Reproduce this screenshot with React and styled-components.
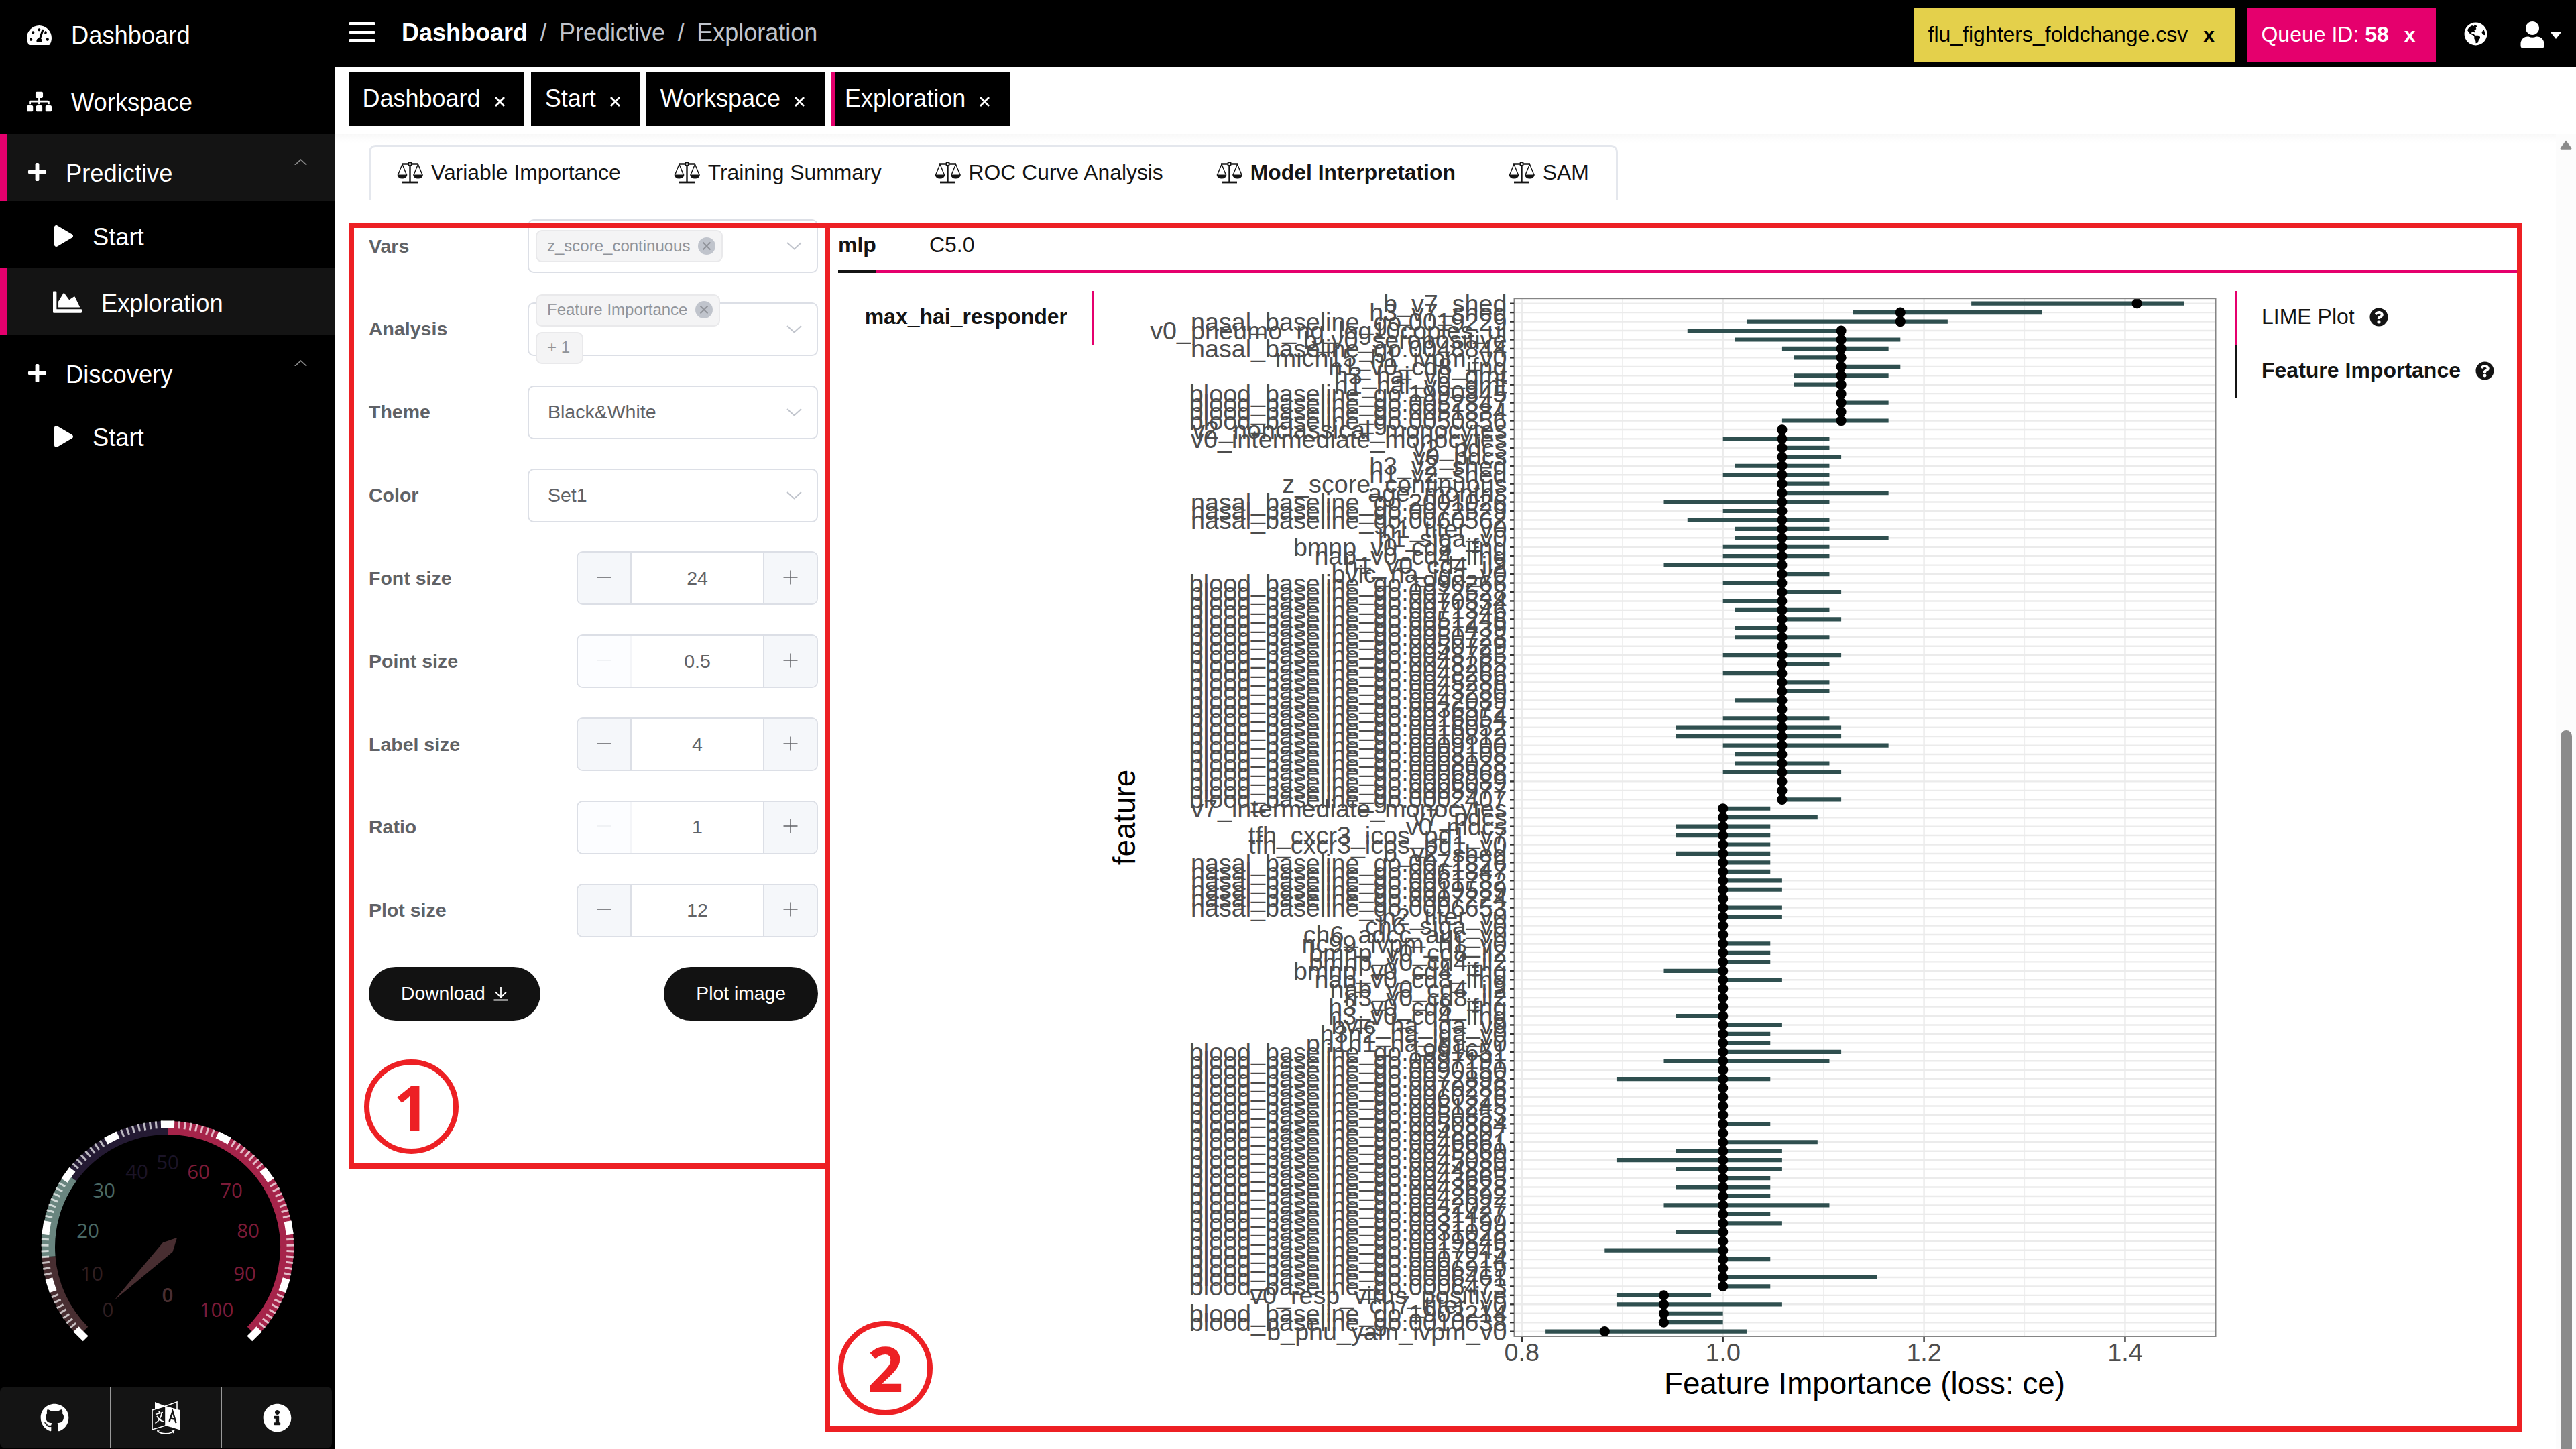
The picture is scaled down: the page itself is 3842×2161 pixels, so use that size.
import React from "react";
import styled, { createGlobalStyle } from "styled-components";
import {
  FaTachometerAlt,
  FaSitemap,
  FaPlus,
  FaPlay,
  FaChartArea,
  FaGlobeAmericas,
  FaUser,
  FaGithub,
  FaInfoCircle,
  FaQuestionCircle,
} from "react-icons/fa";

const PINK = "#e5006d";
const INK = "#141414";
const RED = "#ed2024";
const LINE = "#dcdfe6";

const GlobalStyle = createGlobalStyle`
  * { box-sizing: border-box; }
  html, body { margin: 0; padding: 0; background: #fff; }
  body { font-family: "Liberation Sans", Arial, Helvetica, sans-serif; overflow: hidden; }
  svg { display: block; }
`;

const Page = styled.div`
  position: relative;
  display: flex;
  width: 3842px;
  height: 2161px;
  background: #fff;
  overflow: hidden;
`;

/* ---------- sidebar ---------- */

const Sidebar = styled.aside`
  display: flex;
  flex-direction: column;
  flex: 0 0 500px;
  background: #000;
  color: #fff;
`;

const NavItem = styled.div`
  display: flex;
  align-items: center;
  height: 100px;
  font-size: 36.3px;
  line-height: 40px;
  gap: ${(p) => p.$gap || 30}px;
  padding: ${(p) => p.$top || 5}px 42px 0 ${(p) => (p.$sub ? 69 : 30)}px;
  border-left: 10px solid ${(p) => (p.$active ? PINK : "transparent")};
  background: ${(p) => (p.$active ? INK : "transparent")};
`;

const NavIcon = styled.span`
  display: flex;
  margin-top: ${(p) => p.$dy || 0}px;
`;

const NavArrow = styled.span`
  margin-left: auto;
  margin-top: -34px;
`;

const SidebarFill = styled.div`
  flex: 1;
`;

const GaugeBox = styled.div`
  display: flex;
  justify-content: center;
  height: 400px;
  margin-bottom: 8px;
`;

const FooterBar = styled.div`
  display: flex;
  width: 495px;
  height: 92px;
  margin-bottom: 1px;
  background: ${INK};
  border-radius: 8px;
`;

const FooterButton = styled.div`
  display: flex;
  flex: 1;
  align-items: center;
  justify-content: center;
  border-left: ${(p) => (p.$first ? "none" : "2px solid #999")};
`;

/* ---------- header ---------- */

const Main = styled.main`
  display: flex;
  flex-direction: column;
  flex: 1;
  min-width: 0;
`;

const Header = styled.header`
  display: flex;
  align-items: center;
  height: 100px;
  padding: 0 22px 0 20px;
  background: #000;
  color: #fff;
`;

const Burger = styled.div`
  display: flex;
  flex-direction: column;
  gap: 8px;
  width: 40px;
  margin-right: 39px;
  margin-top: -4px;
`;

const BurgerLine = styled.i`
  height: 4.5px;
  border-radius: 2px;
  background: #fff;
`;

const Crumbs = styled.nav`
  display: flex;
  gap: 18.5px;
  margin-top: -2px;
  font-size: 36px;
  line-height: 40px;
  color: #c0c4cc;
`;

const CrumbHome = styled.b`
  color: #fff;
`;

const HeaderTools = styled.div`
  display: flex;
  align-items: center;
  margin-left: auto;
`;

const HeaderTag = styled.div`
  display: flex;
  align-items: center;
  height: 80px;
  margin: 4px 19.5px 0 0;
  padding: 0 30px 1px 20px;
  font-size: 32px;
  white-space: pre;
  background: ${(p) => p.$bg};
  color: ${(p) => p.$fg};
`;

const TagClose = styled.b`
  margin-left: 23px;
  font-size: 30px;
`;

const OpenTabs = styled.div`
  display: flex;
  gap: 10px;
  height: 100px;
  padding: 8px 20px 12px;
`;

const OpenTab = styled.div`
  display: flex;
  align-items: center;
  height: 80px;
  padding: 0 28.5px 2px ${(p) => (p.$active ? 14.5 : 20.5)}px;
  gap: 20px;
  border-left: ${(p) => (p.$active ? `6px solid ${PINK}` : "none")};
  background: #000;
  color: #fff;
  font-size: 36px;
`;

/* ---------- content ---------- */

const Content = styled.div`
  display: flex;
  flex: 1;
  background: linear-gradient(#f8f8f8, #fdfdfd 8px, #fff 14px);
`;

const ContentInner = styled.div`
  display: flex;
  flex-direction: column;
  width: 3312px;
`;

const ScrollTrack = styled.div`
  display: flex;
  flex-direction: column;
  align-items: center;
  width: 30px;
  padding-top: 9px;
  background: #fcfcfc;
`;

const ScrollThumb = styled.div`
  flex: 1;
  width: 17px;
  margin-top: 866px;
  border-radius: 9px 9px 0 0;
  background: #8b8b8b;
`;

const ToolTabs = styled.div`
  display: flex;
  align-self: flex-start;
  gap: 79px;
  height: 82px;
  margin: 16px 0 0 50px;
  padding: 0 40px 2px 39px;
  border: 3px solid #e4e7ed;
  border-bottom: none;
  border-radius: 10px 10px 0 0;
`;

const ToolTab = styled.div`
  display: flex;
  align-items: center;
  gap: 11px;
  font-size: 31.85px;
  font-weight: ${(p) => (p.$active ? 700 : 400)};
  color: ${INK};
`;

const Split = styled.div`
  display: flex;
  padding: 29px 0 0 50px;
`;

const Form = styled.div`
  display: flex;
  flex-direction: column;
  gap: 43.85px;
  width: 670px;
  margin-right: 30px;
`;

const FormRow = styled.div`
  display: flex;
  align-items: center;
  justify-content: space-between;
  height: 80px;
`;

const FormLabel = styled.label`
  font-size: 28.5px;
  font-weight: 700;
  color: #606266;
`;

const Select = styled.div`
  display: flex;
  align-items: center;
  justify-content: space-between;
  width: 433px;
  height: 80px;
  padding: 0 22px 0 ${(p) => (p.$tags ? 10 : 28)}px;
  border: 2.5px solid ${LINE};
  border-radius: 9px;
  font-size: 28.5px;
  color: #606266;
`;

const TagStack = styled.div`
  display: flex;
  flex-direction: column;
  align-items: flex-start;
  gap: 8.5px;
`;

const Tag = styled.span`
  display: flex;
  align-items: center;
  gap: 12px;
  height: 47.5px;
  padding: 0 ${(p) => (p.$plain ? 18 : 9)}px 1px 15px;
  border: 2.5px solid #e9e9eb;
  border-radius: 9px;
  background: #f4f4f5;
  font-size: 24px;
  color: #909399;
`;

const Stepper = styled.div`
  display: grid;
  grid-template-columns: 80px 1fr 80px;
  width: 360px;
  height: 80px;
  border: 2.5px solid ${LINE};
  border-radius: 9px;
  overflow: hidden;
`;

const StepButton = styled.div`
  display: flex;
  align-items: center;
  justify-content: center;
  padding-bottom: 3px;
  background: ${(p) => (p.$off ? "#fcfdff" : "#f5f7fa")};
  border-${(p) => (p.$side === "left" ? "right" : "left")}: 2.5px solid
    ${(p) => (p.$off ? "#f4f5f8" : LINE)};
`;

const StepValue = styled.div`
  display: flex;
  align-items: center;
  justify-content: center;
  font-size: 28.5px;
  color: #606266;
`;

const PillButton = styled.div`
  display: flex;
  align-items: center;
  gap: 12px;
  height: 80px;
  padding: 0 48px;
  border-radius: 40px;
  background: #121212;
  color: #fff;
  font-size: 28.3px;
`;

const Results = styled.section`
  display: flex;
  flex-direction: column;
  width: 2504px;
`;

const ModelTabs = styled.div`
  display: flex;
  gap: 79px;
  height: 80px;
  border-bottom: 4.5px solid ${PINK};
`;

const ModelTab = styled.div`
  display: flex;
  height: 80px;
  align-items: center;
  padding-bottom: ${(p) => (p.$active ? 0 : 3.5)}px;
  border-bottom: ${(p) => (p.$active ? `4.5px solid ${INK}` : "none")};
  font-size: 32px;
  font-weight: ${(p) => (p.$active ? 700 : 400)};
  color: ${INK};
`;

const ResultBody = styled.div`
  display: grid;
  grid-template-columns: 382px 1701px 1fr;
  padding-top: 27px;
`;

const ClassTab = styled.div`
  display: flex;
  align-items: center;
  justify-content: flex-end;
  height: 80px;
  padding: 0 36px 3px 0;
  border-right: 4.5px solid ${PINK};
  font-size: 32px;
  font-weight: 700;
  color: ${INK};
`;

const PlotTab = styled.div`
  display: flex;
  align-items: center;
  gap: 22px;
  height: 80px;
  padding: 0 0 3px 36px;
  border-left: 4.5px solid ${(p) => (p.$active ? INK : PINK)};
  font-size: 32px;
  font-weight: ${(p) => (p.$active ? 700 : 400)};
  color: ${INK};
`;

/* ---------- overlay annotations ---------- */

const Frame = styled.div`
  position: absolute;
  left: ${(p) => p.$x}px;
  top: ${(p) => p.$y}px;
  width: ${(p) => p.$w}px;
  height: ${(p) => p.$h}px;
  border: 8px solid ${RED};
`;

const Callout = styled.div`
  position: absolute;
  left: ${(p) => p.$x}px;
  top: ${(p) => p.$y}px;
  display: flex;
  align-items: center;
  justify-content: center;
  width: 141px;
  height: 141px;
  border: 8px solid ${RED};
  border-radius: 50%;
  font: 700 93px/1 "Open Sans", "Noto Sans", sans-serif;
  color: ${RED};
`;

/* ---------- small drawings ---------- */

const ScaleIcon = () => (
  <svg width="40" height="33" viewBox="0 0 40 33">
    <path d="M7 3.500h9.500M22.500 3.500H32" stroke={INK} strokeWidth="2.600" />
    <circle cx="19.500" cy="3.500" r="2.500" fill="none" stroke={INK} strokeWidth="1.800" />
    <path d="M19.500 6v24" stroke={INK} strokeWidth="2.400" />
    <path d="M8 31h23" stroke={INK} strokeWidth="2.800" />
    <path
      d="M8 4L1.500 20M8 4L14.500 20M31.500 4L25 20M31.500 4L38 20"
      fill="none"
      stroke={INK}
      strokeWidth="1.400"
    />
    <path d="M0.500 19.500h15q-1 6-7.500 6t-7.500-6zM24 19.500h15q-1 6-7.500 6t-7.500-6z" fill={INK} />
  </svg>
);

const Cross = () => (
  <svg width="17" height="17" viewBox="0 0 17 17" style={{ marginTop: 9 }}>
    <path d="M2 2l13 13M15 2L2 15" stroke="#fff" strokeWidth="2.8" />
  </svg>
);

const Chevron = ({ up, color = "#c0c4cc", w = 23 }) => (
  <svg width={w} height={w * 0.52} viewBox="0 0 23 12">
    <path
      d={up ? "M1 11L11.5 1.5L22 11" : "M1 1L11.5 10.5L22 1"}
      fill="none"
      stroke={color}
      strokeWidth="2"
    />
  </svg>
);

const TagX = () => (
  <svg width="26" height="26" viewBox="0 0 26 26">
    <circle cx="13" cy="13" r="13" fill="#c0c4cc" />
    <path d="M7.5 7.5l11 11M18.5 7.5l-11 11" stroke="#909399" strokeWidth="1.8" />
  </svg>
);

const Sign = ({ plus, off }) => (
  <svg width="22" height="22" viewBox="0 0 22 22">
    <path
      d={plus ? "M0.5 11h21M11 0.5v21" : "M0.5 11h21"}
      stroke={off ? "#eceef2" : "#606266"}
      strokeWidth="1.5"
    />
  </svg>
);

const DownloadIcon = () => (
  <svg width="22" height="22" viewBox="0 0 22 22">
    <path
      d="M11 1v15M3 8.5l8 8 8-8M0.5 20.5h21"
      fill="none"
      stroke="#fff"
      strokeWidth="1.8"
    />
  </svg>
);

const TranslateIcon = () => (
  <svg width="43" height="49" viewBox="0 0 43 49">
    <path d="M5 1l15.500 6L5 12z" fill="#fff" />
    <path d="M20.500 7L38 1v11" fill="none" stroke="#fff" strokeWidth="1.6" />
    <path d="M1 13l20-6v29L1 42z" fill="none" stroke="#fff" strokeWidth="1.6" />
    <path d="M21 7l21.500 6v29.500L21 36z" fill="#fff" />
    <path
      d="M6 19.500l11-3M11 15l1 3M15 18c-1 7-5 12-9.500 14.500M8 22c2 4 6 7 10 8"
      fill="none"
      stroke="#fff"
      strokeWidth="1.7"
    />
    <path
      d="M26.500 30l5-15 5 17M28 25.500l7.500 1.200"
      fill="none"
      stroke="#141414"
      strokeWidth="2.4"
    />
    <path d="M9 44.500c7 4.500 17 4.500 24 0" fill="none" stroke="#fff" strokeWidth="1.6" />
    <path d="M29.500 43.500l5-.8-1.500 5zM8 43l4 .5-3 3z" fill="#fff" />
  </svg>
);

/* ---------- gauge ---------- */

const polar = (r, v) => {
  const a = ((225 - v * 2.7) * Math.PI) / 180;
  return [200 + r * Math.cos(a), 200 - r * Math.sin(a)];
};

const BANDS = [
  [0, 15, "#482e31"],
  [15, 30, "#69857f"],
  [30, 50, "#241a33"],
  [50, 100, "#a6244a"],
];

const GAUGE_LABELS = [
  [0, 111, 293, "#301f21"],
  [10, 87, 239, "#301f21"],
  [20, 81, 175, "#4a6965"],
  [30, 105, 115, "#4a6965"],
  [40, 154, 87, "#1b1427"],
  [50, 200, 73, "#1b1427"],
  [60, 246, 87, "#7b1b38"],
  [70, 295, 115, "#7b1b38"],
  [80, 320, 175, "#7b1b38"],
  [90, 315, 239, "#7b1b38"],
  [100, 273, 293, "#7b1b38"],
];

const GaugeText = styled.text`
  font-family: "Open Sans", "Noto Sans", sans-serif;
  font-size: 29.5px;
  text-anchor: middle;
`;

function Gauge() {
  const ticks = Array.from({ length: 101 }, (_, i) => i);
  return (
    <svg width="400" height="400" viewBox="0 0 400 400">
      {BANDS.map(([from, to, color]) => {
        const [x1, y1] = polar(178, from);
        const [x2, y2] = polar(178, to);
        return (
          <path
            key={from}
            d={`M${x1} ${y1}A178 178 0 0 1 ${x2} ${y2}`}
            fill="none"
            stroke={color}
            strokeWidth="20"
          />
        );
      })}
      {ticks.map((t) => {
        const major = t % 10 === 0;
        const [x1, y1] = polar(177.5, t);
        const [x2, y2] = polar(188.5, t);
        return (
          <line
            key={t}
            x1={x1}
            y1={y1}
            x2={x2}
            y2={y2}
            stroke="#fff"
            strokeOpacity={major ? 1 : 0.7}
            strokeWidth={major ? 20 : 3}
          />
        );
      })}
      {GAUGE_LABELS.map(([n, x, y, c]) => (
        <GaugeText key={n} x={x} y={y + 11} fill={c}>
          {n}
        </GaugeText>
      ))}
      <GaugeText x="200" y="282" fill="#482e31" fontWeight="600">
        0
      </GaugeText>
      <path d="M120.500 279L193 193L214 186L207.500 207z" fill="#482e31" />
    </svg>
  );
}

/* ---------- feature importance chart ---------- */

const blood = (ids) => ids.map((n) => `blood_baseline_go.${n}`);
const nasal = (ids) => ids.map((n) => `nasal_baseline_go.${n}`);

const FEATURES = [
  "b_v7_shed",
  "h3_v7_shed",
  ...nasal(["0019229"]),
  "v0_pneumo_ng_log10copies_ul",
  "b_v0_seropositive",
  ...nasal(["0048844"]),
  "mich15_h1_ivpm_v0",
  "h1_v0_cd8_ifng",
  "h3_hai_v0_gmt",
  "h1_hai_v0_gmt",
  ...blood(["1990845", "0052847", "0051884", "0050856"]),
  "v2_nonclassical_monocytes",
  "v0_intermediate_monocytes",
  "v2_pdcs",
  "v0_pdcs",
  "h3_v2_shed",
  "h1_v2_shed",
  "z_score_continuous",
  "age_months",
  ...nasal(["2001026", "0072529", "0060562"]),
  "h1_titer_v0",
  "h1_siga_v0",
  "bmnp_v0_cd8_ifng",
  "nab_v0_cd4_ifng",
  "h1_v0_cd4_il2",
  "bvic_na_iga_v0",
  ...blood([
    "1990266", "0072528", "0070534", "0071346", "0051246", "0051439", "0050728",
    "0050729", "0048785", "0048265", "0048266", "0045286", "0043280", "0042089",
    "0036572", "0016054", "0016052", "0010812", "0009100", "0008108", "0008038",
    "0006968", "0006089", "0005977", "0002407",
  ]),
  "v7_intermediate_monocytes",
  "v7_pdcs",
  "v0_mdcs",
  "tfh_cxcr3_icos_pd1_v7",
  "tfh_cxcr3_icos_pd1_v0",
  "b_v2_shed",
  ...nasal(["0071826", "0061847", "0061782", "0019589", "0007224", "0006653"]),
  "h2_titer_v0",
  "ch6_siga_v0",
  "ch6_adcc_auc_v0",
  "nc99_ivpm_h1_v0",
  "bmnp_v0_cd8_il2",
  "bmnp_v0_cd4_il2",
  "bmnp_v0_cd4_ifng",
  "nab_v0_cd8_ifng",
  "nab_v0_cd4_il2",
  "h3_v0_cd8_il2",
  "h3_v0_cd8_ifng",
  "h3_v0_cd4_ifng",
  "bvic_ha_iga_v0",
  "h3n2_na_iga_v0",
  "ph1n1_na_iga_v0",
  ...blood([
    "1991651", "0097191", "0090150", "0072898", "0070286", "0060326", "0051245",
    "0050853", "0050864", "0048807", "0046661", "0045860", "0045080", "0044880",
    "0043665", "0043628", "0042692", "0042027", "0031427", "0031199", "0031028",
    "0019846", "0017045", "0007214", "0006919", "0006461", "0006473",
  ]),
  "v0_resp_virus_positive",
  "ch7_titer_v0",
  ...blood(["1903214", "0010638"]),
  "b_phu_yam_ivpm_v0",
];

/* low, median, high of every feature in steps of 1/85 around a loss ratio of 1.0 */
const RANGES = [
  [21, 35, 39], [11, 15, 27], [2, 15, 19], [-3, 10, 10], [1, 10, 15], [5, 10, 14],
  [6, 10, 10], [10, 10, 15], [6, 10, 14], [6, 10, 10], [10, 10, 10], [10, 10, 14],
  [10, 10, 10], [5, 10, 14], [5, 5, 5], [0, 5, 9], [5, 5, 9], [5, 5, 10], [1, 5, 9],
  [0, 5, 9], [5, 5, 9], [5, 5, 14], [-5, 5, 9], [0, 5, 5], [-3, 5, 9], [1, 5, 9],
  [1, 5, 14], [0, 5, 9], [0, 5, 9], [-5, 5, 5], [5, 5, 9], [0, 5, 5], [5, 5, 10],
  [0, 5, 5], [1, 5, 9], [5, 5, 10], [1, 5, 5], [1, 5, 9], [5, 5, 5], [0, 5, 10],
  [5, 5, 9], [0, 5, 5], [5, 5, 9], [5, 5, 9], [1, 5, 5], [5, 5, 5], [0, 5, 9],
  [-4, 5, 10], [-4, 5, 10], [0, 5, 14], [1, 5, 5], [1, 5, 9], [0, 5, 10], [5, 5, 5],
  [5, 5, 5], [5, 5, 10], [0, 0, 4], [0, 0, 8], [-4, 0, 4], [-4, 0, 4], [0, 0, 4],
  [-4, 0, 4], [0, 0, 4], [0, 0, 4], [0, 0, 5], [0, 0, 5], [0, 0, 0], [0, 0, 5],
  [0, 0, 5], [0, 0, 0], [0, 0, 0], [0, 0, 4], [0, 0, 4], [0, 0, 4], [-5, 0, 0],
  [0, 0, 5], [0, 0, 0], [0, 0, 0], [0, 0, 0], [-4, 0, 0], [0, 0, 5], [0, 0, 4],
  [0, 0, 4], [0, 0, 10], [-5, 0, 9], [0, 0, 0], [-9, 0, 4], [0, 0, 0], [0, 0, 0],
  [0, 0, 0], [0, 0, 0], [0, 0, 4], [0, 0, 0], [0, 0, 8], [-4, 0, 5], [-9, 0, 5],
  [-4, 0, 5], [0, 0, 4], [-4, 0, 4], [0, 0, 4], [-5, 0, 9], [0, 0, 4], [0, 0, 5],
  [-4, 0, 0], [0, 0, 0], [-10, 0, 0], [0, 0, 4], [0, 0, 0], [0, 0, 13], [0, 0, 4],
  [-9, -5, -1], [-9, -5, 5], [-5, -5, 0], [-5, -5, 0], [-15, -10, 2],
];

const rowY = (i) => 18.7 + i * 13.447;
const stepX = (u) => 937.7 + u * 17.64;
const PANEL = { left: 626.5, right: 1672.5, top: 11.2, bottom: 1559 };

const ChartSvg = styled.svg`
  overflow: visible;
  font-kerning: none;
`;

const AxisText = styled.text`
  font-size: 37.7px;
  fill: #4d4d4d;
  text-anchor: ${(p) => p.$anchor};
`;

const AxisTitle = styled.text`
  font-size: 45.8px;
  fill: #000;
  text-anchor: middle;
`;

function ImportanceChart() {
  return (
    <ChartSvg width="1701" height="1680" viewBox="0 0 1701 1680">
      {[0.8, 1.0, 1.2, 1.4].map((v) => (
        <line key={v} x1={937.7 + (v - 1) * 1499.4} x2={937.7 + (v - 1) * 1499.4}
          y1={PANEL.top} y2={PANEL.bottom} stroke="#ebebeb" strokeWidth="2.4" />
      ))}
      {[0.9, 1.1, 1.3].map((v) => (
        <line key={v} x1={937.7 + (v - 1) * 1499.4} x2={937.7 + (v - 1) * 1499.4}
          y1={PANEL.top} y2={PANEL.bottom} stroke="#efefef" strokeWidth="1.3" />
      ))}
      {RANGES.map((_, i) => (
        <line key={i} x1={PANEL.left} x2={PANEL.right} y1={rowY(i)} y2={rowY(i)}
          stroke="#ebebeb" strokeWidth="2.4" />
      ))}
      {RANGES.map(([lo, mid, hi], i) => (
        <g key={i}>
          <line x1={stepX(lo)} x2={stepX(hi)} y1={rowY(i)} y2={rowY(i)}
            stroke="#2f4f4f" strokeWidth="6.200" />
          <circle cx={stepX(mid)} cy={rowY(i)} r="7.600" fill="#000" />
        </g>
      ))}
      <rect x={PANEL.left} y={PANEL.top} width={PANEL.right - PANEL.left}
        height={PANEL.bottom - PANEL.top} fill="none" stroke="#858585" strokeWidth="2" />
      {FEATURES.map((name, i) => (
        <g key={i}>
          <line x1="620" x2="626" y1={rowY(i)} y2={rowY(i)} stroke="#333" strokeWidth="2.4" />
          <AxisText $anchor="end" x="615.500" y={rowY(i) + 13.2}>
            {name}
          </AxisText>
        </g>
      ))}
      {["0.8", "1.0", "1.2", "1.4"].map((t) => {
        const x = 937.7 + (Number(t) - 1) * 1499.4;
        return (
          <g key={t}>
            <line x1={x} x2={x} y1="1560" y2="1568" stroke="#333" strokeWidth="2.400" />
            <AxisText $anchor="middle" x={x} y="1596">
              {t}
            </AxisText>
          </g>
        );
      })}
      <AxisTitle x="1149" y="1645">
        Feature Importance (loss: ce)
      </AxisTitle>
      <AxisTitle transform="translate(61 785) rotate(-90)">feature</AxisTitle>
    </ChartSvg>
  );
}

/* ---------- form pieces ---------- */

const NumberRow = ({ label, value, off }) => (
  <FormRow>
    <FormLabel>{label}</FormLabel>
    <Stepper>
      <StepButton $side="left" $off={off}>
        <Sign off={off} />
      </StepButton>
      <StepValue>{value}</StepValue>
      <StepButton $side="right">
        <Sign plus />
      </StepButton>
    </Stepper>
  </FormRow>
);

const TOOL_TABS = [
  "Variable Importance",
  "Training Summary",
  "ROC Curve Analysis",
  "Model Interpretation",
  "SAM",
];

export default function App() {
  return (
    <Page>
      <GlobalStyle />
      <Sidebar>
        <NavItem $gap={29}>
          <NavIcon><FaTachometerAlt size={37} /></NavIcon>
          Dashboard
        </NavItem>
        <NavItem $gap={29}>
          <NavIcon $dy={-3}><FaSitemap size={37} /></NavIcon>
          Workspace
        </NavItem>
        <NavItem $active $gap={27} $top={17}>
          <NavIcon $dy={-5}><FaPlus size={31} /></NavIcon>
          Predictive
          <NavArrow><Chevron up w={19} color="#8b8b8b" /></NavArrow>
        </NavItem>
        <NavItem $sub $gap={27} $top={7}>
          <NavIcon $dy={-4}><FaPlay size={32} /></NavIcon>
          Start
        </NavItem>
        <NavItem $sub $active $gap={29} $top={5}>
          <NavIcon $dy={-4}><FaChartArea size={43} /></NavIcon>
          Exploration
        </NavItem>
        <NavItem $gap={27} $top={17}>
          <NavIcon $dy={-5}><FaPlus size={31} /></NavIcon>
          Discovery
          <NavArrow><Chevron up w={19} color="#8b8b8b" /></NavArrow>
        </NavItem>
        <NavItem $sub $gap={27} $top={6}>
          <NavIcon $dy={-4}><FaPlay size={32} /></NavIcon>
          Start
        </NavItem>
        <SidebarFill />
        <GaugeBox>
          <Gauge />
        </GaugeBox>
        <FooterBar>
          <FooterButton $first><FaGithub size={43} /></FooterButton>
          <FooterButton><TranslateIcon /></FooterButton>
          <FooterButton><FaInfoCircle size={43} /></FooterButton>
        </FooterBar>
      </Sidebar>

      <Main>
        <Header>
          <Burger>
            <BurgerLine />
            <BurgerLine />
            <BurgerLine />
          </Burger>
          <Crumbs>
            <CrumbHome>Dashboard</CrumbHome>
            <span>/</span>
            <span>Predictive</span>
            <span>/</span>
            <span>Exploration</span>
          </Crumbs>
          <HeaderTools>
            <HeaderTag $bg="#e4d04b" $fg="#000">
              flu_fighters_foldchange.csv<TagClose>x</TagClose>
            </HeaderTag>
            <HeaderTag $bg={PINK} $fg="#fff">
              Queue ID: <b>58</b>
              <TagClose>x</TagClose>
            </HeaderTag>
            <NavIcon><FaGlobeAmericas size={35} style={{ margin: "0 47px 0 23px" }} /></NavIcon>
            <NavIcon $dy={4}><FaUser size={40} /></NavIcon>
            <svg width="16" height="10" viewBox="0 0 16 10" style={{ margin: "5px 0 0 7px" }}>
              <path d="M0 0h16L8 10z" fill="#fff" />
            </svg>
          </HeaderTools>
        </Header>

        <OpenTabs>
          {["Dashboard", "Start", "Workspace", "Exploration"].map((t) => (
            <OpenTab key={t} $active={t === "Exploration"}>
              {t}
              <Cross />
            </OpenTab>
          ))}
        </OpenTabs>

        <Content>
          <ContentInner>
            <ToolTabs>
              {TOOL_TABS.map((t) => (
                <ToolTab key={t} $active={t === "Model Interpretation"}>
                  <ScaleIcon />
                  {t}
                </ToolTab>
              ))}
            </ToolTabs>

            <Split>
              <Form>
                <FormRow>
                  <FormLabel>Vars</FormLabel>
                  <Select $tags>
                    <Tag>z_score_continuous<TagX /></Tag>
                    <Chevron />
                  </Select>
                </FormRow>
                <FormRow>
                  <FormLabel>Analysis</FormLabel>
                  <Select $tags>
                    <TagStack>
                      <Tag>Feature Importance<TagX /></Tag>
                      <Tag $plain>+ 1</Tag>
                    </TagStack>
                    <Chevron />
                  </Select>
                </FormRow>
                <FormRow>
                  <FormLabel>Theme</FormLabel>
                  <Select>Black&amp;White<Chevron /></Select>
                </FormRow>
                <FormRow>
                  <FormLabel>Color</FormLabel>
                  <Select>Set1<Chevron /></Select>
                </FormRow>
                <NumberRow label="Font size" value="24" />
                <NumberRow label="Point size" value="0.5" off />
                <NumberRow label="Label size" value="4" />
                <NumberRow label="Ratio" value="1" off />
                <NumberRow label="Plot size" value="12" />
                <FormRow>
                  <PillButton>Download<DownloadIcon /></PillButton>
                  <PillButton>Plot image</PillButton>
                </FormRow>
              </Form>

              <Results>
                <ModelTabs>
                  <ModelTab $active>mlp</ModelTab>
                  <ModelTab>C5.0</ModelTab>
                </ModelTabs>
                <ResultBody>
                  <ClassTab>max_hai_responder</ClassTab>
                  <ImportanceChart />
                  <div>
                    <PlotTab>LIME Plot<FaQuestionCircle size={28} /></PlotTab>
                    <PlotTab $active>Feature Importance<FaQuestionCircle size={28} /></PlotTab>
                  </div>
                </ResultBody>
              </Results>
            </Split>
          </ContentInner>
          <ScrollTrack>
            <svg width="18" height="14" viewBox="0 0 18 14">
              <path d="M9 0.500L17.500 12q0 1.800-1.500 1.800H2Q0.500 13.800 0.500 12z" fill="#8b8b8b" />
            </svg>
            <ScrollThumb />
          </ScrollTrack>
        </Content>
      </Main>

      <Frame $x={520} $y={332} $w={718} $h={1411} />
      <Frame $x={1230} $y={332} $w={2532} $h={1803} />
      <Callout $x={543} $y={1580}>1</Callout>
      <Callout $x={1250} $y={1970}>2</Callout>
    </Page>
  );
}
